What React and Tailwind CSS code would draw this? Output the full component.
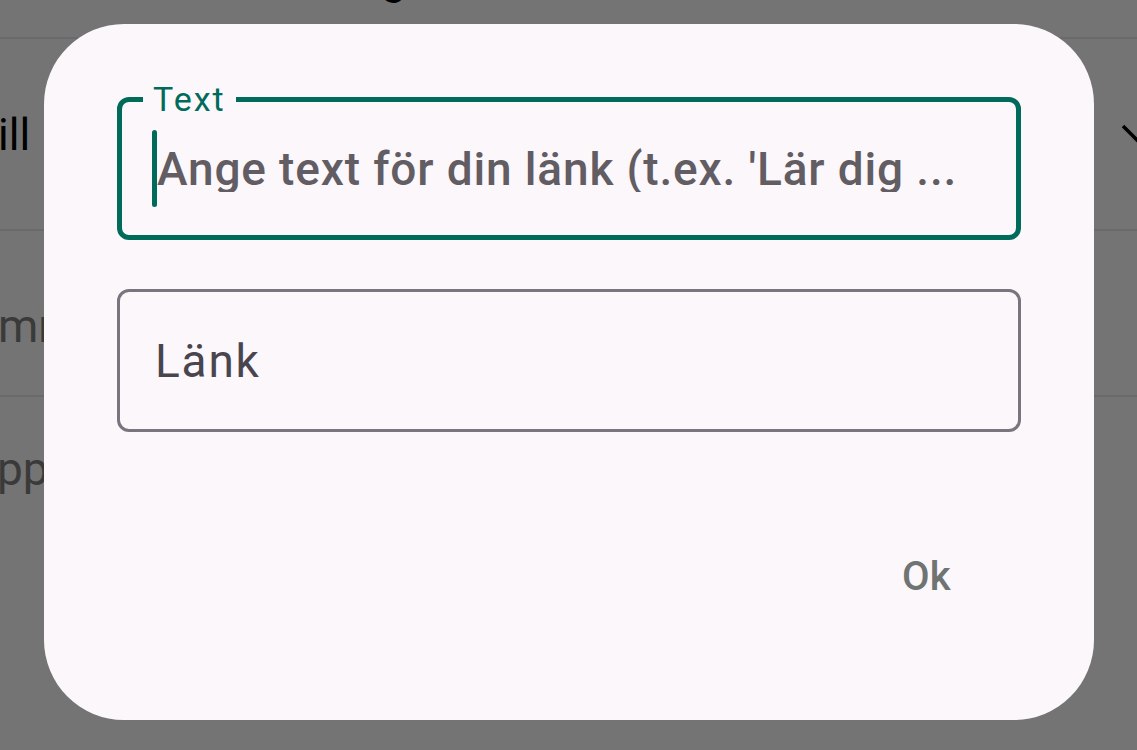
import React from "react";

export default function App() {
  return (
    <div
      className="relative w-[1137px] h-[750px] overflow-hidden bg-[#747474]"
      style={{ fontFamily: "Roboto, 'Noto Sans', sans-serif" }}
    >
      {/* underlying page */}
      <div className="flex flex-col">
        <div className="h-[37px] overflow-hidden">
          <div className="mt-[-45px] ml-[381px] text-[46px] leading-none text-black">g</div>
        </div>
        <div className="h-[2px] bg-[#6a6a6a]" />
        <div className="relative h-[190px] pt-[74px]">
          <div className="text-[44px] leading-none text-black ml-[-2px]">ill</div>
          <svg className="absolute left-[1116px] top-[80px]" width="60" height="60" viewBox="0 0 60 60">
            <polyline points="7,7 29,29 51,7" fill="none" stroke="#000" strokeWidth="3.5" />
          </svg>
        </div>
        <div className="h-[2px] bg-[#6a6a6a]" />
        <div className="h-[164px] pt-[72px]">
          <div className="text-[46px] leading-none text-[#3a3a3a] ml-[-2px]">mmar</div>
        </div>
        <div className="h-[2px] bg-[#6a6a6a]" />
        <div className="pt-[49px]">
          <div className="text-[46px] leading-none text-[#3a3a3a] ml-[-3px]">pp</div>
        </div>
      </div>

      {/* dialog */}
      <div className="absolute left-[44px] top-[24px] w-[1050px] h-[696px] rounded-[80px] bg-[#fcf7fb] px-[73px] pt-[73px] flex flex-col">
        <div className="relative h-[143px] border-[5px] border-[#006b5b] rounded-[12px] flex items-center pl-[30px]">
          <div className="absolute left-[21px] top-[-20px] px-[10px] bg-[#fcf7fb] text-[34px] leading-none tracking-[2px] text-[#006b5b]">
            Text
          </div>
          <div className="w-[5px] h-[77px] rounded-full bg-[#006b5b] shrink-0" />
          <div className="text-[46px] leading-none tracking-[0.85px] text-[#625c63] font-medium whitespace-nowrap overflow-hidden">
            Ange text för din länk (t.ex. 'Lär dig ...
          </div>
        </div>
        <div className="mt-[49px] h-[143px] border-[3px] border-[#79747e] rounded-[12px] flex items-center pl-[35px]">
          <div className="text-[46px] leading-none tracking-[1.8px] text-[#49454f]">Länk</div>
        </div>
        <div className="mt-[125px] flex justify-end pr-[70px]">
          <div className="text-[40px] leading-none tracking-[0.3px] font-medium text-[#6f7372]">Ok</div>
        </div>
      </div>
    </div>
  );
}
